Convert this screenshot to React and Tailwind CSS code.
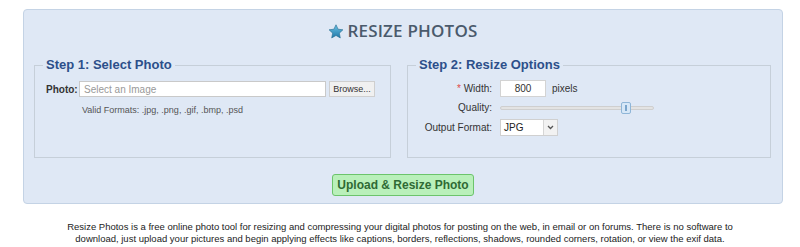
import { useState } from "react";

const Star = () => (
  <svg width="16" height="15" viewBox="0 0 24 23">
    <defs>
      <linearGradient id="sg" x1="0" y1="0" x2="0" y2="1">
        <stop offset="0" stopColor="#6cc3e6" />
        <stop offset="1" stopColor="#1f78a8" />
      </linearGradient>
    </defs>
    <path
      d="M12 1.2l3.2 6.8 7.4.9-5.5 5.1 1.5 7.3L12 17.6l-6.6 3.7 1.5-7.3L1.4 8.9l7.4-.9z"
      fill="url(#sg)"
      stroke="#2a6f93"
      strokeWidth="1"
      strokeLinejoin="round"
    />
  </svg>
);

const App = () => {
  const [width, setWidth] = useState("800");

  const labelClass = "text-[10px] text-[#333] text-right";
  const legendClass =
    "ml-[8px] px-[3px] font-['Liberation_Sans',Arial,sans-serif] font-bold text-[13px] leading-[14px] text-[#2c4f8a]";

  return (
    <div className="w-[800px] h-[247px] bg-white font-['Liberation_Sans',Tahoma,Arial,sans-serif] overflow-hidden">
      <div className="pt-[9px] pl-[23px]">
        <div className="w-[760px] h-[195px] rounded-[4px] border border-[#c4d3e5] bg-[#dfe8f5] px-[10px]">
          {/* title */}
          <div className="h-[42px] mb-[6px] flex items-center justify-center gap-[3px]">
            <Star />
            <span className="font-['Open_Sans',sans-serif] font-semibold text-[17px] tracking-[0.2px] text-[#4a5a6c]">
              RESIZE PHOTOS
            </span>
          </div>

          <div className="flex gap-[16px]">
            {/* step 1 */}
            <fieldset className="w-[357px] h-[100px] border border-[#c6cfd9]">
              <legend className={legendClass}>Step 1: Select Photo</legend>
              <div className="pl-[11px]">
                <div className="flex items-center mt-[9px]">
                  <span className="text-[10px] font-bold text-[#333] w-[33px]">Photo:</span>
                  <input
                    readOnly
                    placeholder="Select an Image"
                    className="w-[247px] h-[16px] bg-white border border-[#c9c9c9] px-[4px] text-[10px] text-[#333] placeholder-[#999] outline-none"
                  />
                  <button className="ml-[3px] w-[46px] h-[16px] bg-[#f0f0f0] border border-[#cfcfcf] text-[9px] text-[#333] leading-none">
                    Browse...
                  </button>
                </div>
                <div className="mt-[7px] ml-[36px] text-[9px] text-[#555]">
                  Valid Formats: .jpg, .png, .gif, .bmp, .psd
                </div>
              </div>
            </fieldset>

            {/* step 2 */}
            <fieldset className="w-[364px] h-[100px] border border-[#c6cfd9]">
              <legend className={legendClass}>Step 2: Resize Options</legend>
              <div className="grid grid-cols-[84px_1fr] gap-x-[8px] items-center mt-[8px]">
                <span className={labelClass}>
                  <span className="text-[#e04848]">*</span> Width:
                </span>
                <div className="flex items-center h-[17px]">
                  <input
                    value={width}
                    onChange={(e) => setWidth(e.target.value)}
                    className="w-[46px] h-[17px] bg-white border border-[#d3d3d3] text-center text-[10px] text-[#333] outline-none"
                  />
                  <span className="ml-[6px] text-[10px] text-[#333]">pixels</span>
                </div>

                <span className={`${labelClass} mt-[3px]`}>Quality:</span>
                <div className="relative h-[14px] mt-[3px] w-[154px] flex items-center">
                  <div className="w-full h-[4px] rounded-full bg-[#e3e3e3] border border-[#cfcfcf]" />
                  <div className="absolute left-[121px] top-[1px] w-[10px] h-[12px] rounded-[2px] border border-[#8fb6d8] bg-[#d6e7f7]">
                    <div className="mx-auto mt-[2px] w-[2px] h-[6px] bg-[#7aa5cc]" />
                  </div>
                </div>

                <span className={`${labelClass} mt-[4px]`}>Output Format:</span>
                <div className="mt-[4px] flex w-[58px] h-[17px] border border-[#d0d0d0] bg-white">
                  <span className="flex-1 text-[10px] text-[#222] pl-[3px] leading-[15px]">JPG</span>
                  <span className="w-[14px] border-l border-[#d6d6d6] bg-[#f2f2f2] flex items-center justify-center">
                    <svg width="7" height="5" viewBox="0 0 7 5">
                      <path d="M1 1l2.5 2.5L6 1" fill="none" stroke="#555" strokeWidth="1.3" />
                    </svg>
                  </span>
                </div>
              </div>
            </fieldset>
          </div>

          {/* submit */}
          <div className="flex justify-center mt-[16px]">
            <button className="w-[142px] h-[22px] rounded-[3px] border border-[#6cc46c] bg-[#b9f0ba] font-bold text-[12px] text-[#2f6a35]">
              Upload &amp; Resize Photo
            </button>
          </div>
        </div>
      </div>

      <p className="mt-[17px] text-center whitespace-nowrap text-[9.5px] leading-[12px] text-[#222]">
        Resize Photos is a free online photo tool for resizing and compressing your digital photos for posting on the web, in email or on forums. There is no software to
        <br />
        download, just upload your pictures and begin applying effects like captions, borders, reflections, shadows, rounded corners, rotation, or view the exif data.
      </p>
    </div>
  );
};

export default App;
